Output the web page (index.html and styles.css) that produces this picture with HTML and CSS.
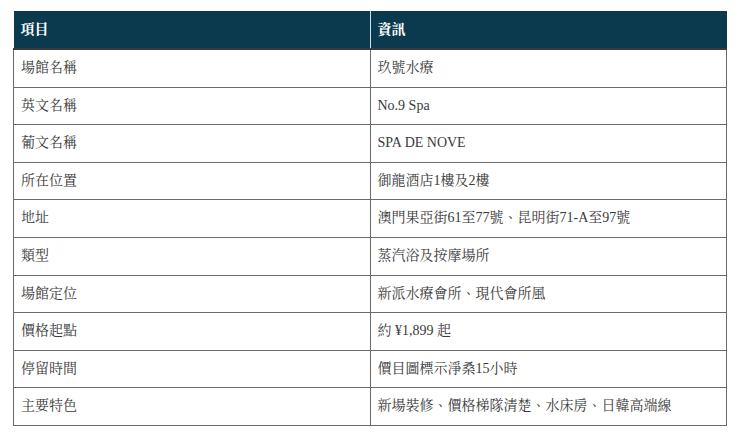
FILE: index.html
```html
<!DOCTYPE html>
<html lang="zh-Hant">
<head>
<meta charset="utf-8">
<link rel="stylesheet" href="styles.css">
</head>
<body>
<div class="page">
<table class="info">
<thead>
<tr><th>項目</th><th>資訊</th></tr>
</thead>
<tbody>
<tr><td>場館名稱</td><td>玖號水療</td></tr>
<tr><td>英文名稱</td><td>No.9 Spa</td></tr>
<tr><td>葡文名稱</td><td>SPA DE NOVE</td></tr>
<tr><td>所在位置</td><td>御龍酒店1樓及2樓</td></tr>
<tr><td>地址</td><td>澳門果亞街61至77號、昆明街71-A至97號</td></tr>
<tr><td>類型</td><td>蒸汽浴及按摩場所</td></tr>
<tr><td>場館定位</td><td>新派水療會所、現代會所風</td></tr>
<tr><td>價格起點</td><td>約 ¥1,899 起</td></tr>
<tr><td>停留時間</td><td>價目圖標示淨桑15小時</td></tr>
<tr><td>主要特色</td><td>新場裝修、價格梯隊清楚、水床房、日韓高端線</td></tr>
</tbody>
</table>
</div>
</body>
</html>
```
FILE: styles.css
```css
html, body {
  margin: 0;
  padding: 0;
  background: #ffffff;
}
.page {
  padding: 11px 14px 0 13px;
  font-family: "Liberation Serif", "Noto Serif CJK TC", "Noto Sans CJK TC", serif;
  font-size: 14px;
  color: #3a3a3a;
}
.info {
  width: 714px;
  border-collapse: collapse;
  table-layout: fixed;
}
.info th {
  background: #0b3a4e;
  color: #ffffff;
  font-weight: bold;
  text-align: left;
  padding: 8px 7px;
  line-height: 21px;
  border-bottom: 2px solid #3a3a3a;
}
.info th + th {
  border-left: 1px solid #cfe0e8;
}
.info td {
  padding: 8px 7px;
  line-height: 20.6px;
  border: 1px solid #6a6a6a;
  vertical-align: middle;
}
```
